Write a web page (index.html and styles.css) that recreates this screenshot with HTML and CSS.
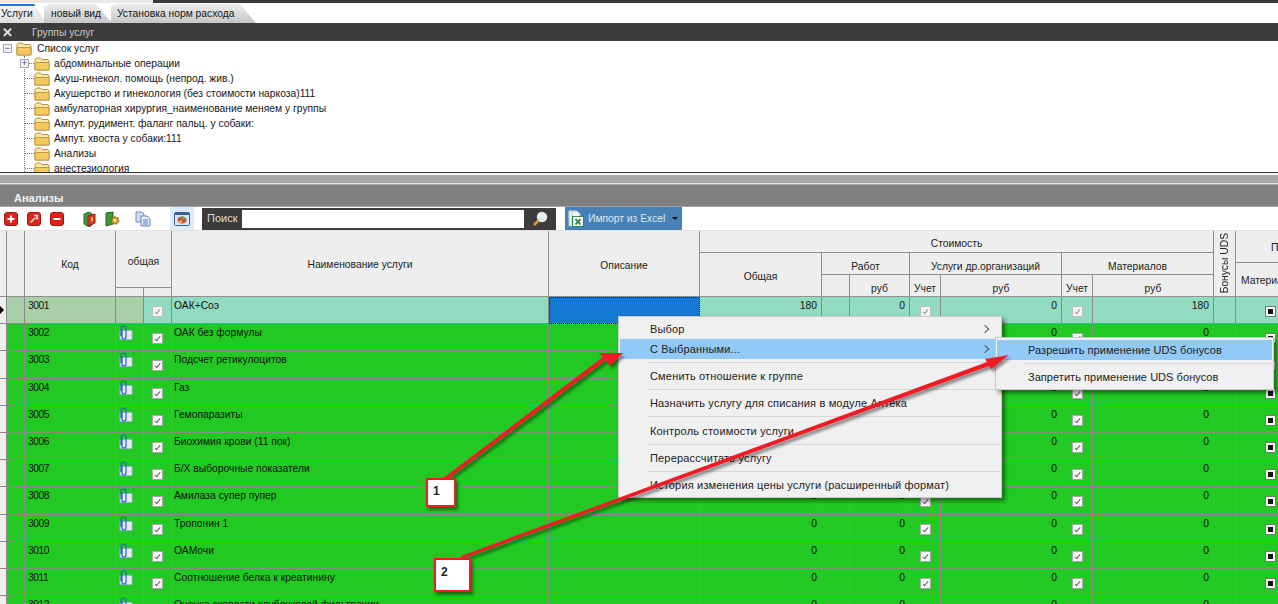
FILE: index.html
```html
<!DOCTYPE html>
<html lang="ru">
<head>
  <meta charset="UTF-8">
  <title>Услуги</title>
  <link rel="stylesheet" href="styles.css">
</head>
<body>

<svg class="defs" width="0" height="0">
  <symbol id="folder" viewBox="0 0 16 14">
    <path d="M1 4V2.500L2.500 1h4L8 2.500h6L15 4v9H1z" fill="#fbe7a8" stroke="#b9913e"/>
    <path d="M1 5.500h14V13H1z" fill="#f6c95f" stroke="#c09a45"/>
  </symbol>
  <symbol id="clip" viewBox="0 0 15 16">
    <path d="M2 5.500h12v9H2z" fill="#e4edf9" stroke="#9db4d8"/>
    <path d="M4 4.500V12a2 2 0 0 0 4 0V3.500a2.500 2.500 0 0 0-5 0V11" fill="none" stroke="#2a62c8" stroke-width="1.200"/>
  </symbol>
</svg>

<div class="topline"><span class="topline-left"></span></div>

<div class="tabs">
  <a class="tab tab-active">Услуги</a>
  <a class="tab tab-new">новый вид</a>
  <a class="tab tab-norm">Установка норм расхода</a>
</div>

<div class="groups-bar">
  <span class="groups-close">&#10005;</span>
  <span>Группы услуг</span>
</div>

<div class="tree">
  <div class="tree-root">
    <span class="tree-box">&minus;</span>
    <svg class="folder"><use href="#folder"/></svg>
    <span>Список услуг</span>
  </div>
  <div class="tree-list">
    <div class="tree-item"><span class="tree-box tree-box-child">+</span><svg class="folder"><use href="#folder"/></svg><span>абдоминальные операции</span></div>
    <div class="tree-item"><svg class="folder"><use href="#folder"/></svg><span>Акуш-гинекол. помощь (непрод. жив.)</span></div>
    <div class="tree-item"><svg class="folder"><use href="#folder"/></svg><span>Акушерство и гинекология (без стоимости наркоза)111</span></div>
    <div class="tree-item"><svg class="folder"><use href="#folder"/></svg><span>амбулаторная хирургия_наименование меняем у группы</span></div>
    <div class="tree-item"><svg class="folder"><use href="#folder"/></svg><span>Ампут. рудимент. фаланг пальц. у собаки:</span></div>
    <div class="tree-item"><svg class="folder"><use href="#folder"/></svg><span>Ампут. хвоста у собаки:111</span></div>
    <div class="tree-item"><svg class="folder"><use href="#folder"/></svg><span>Анализы</span></div>
    <div class="tree-item"><svg class="folder"><use href="#folder"/></svg><span>анестезиология</span></div>
  </div>
</div>

<div class="splitter"></div>
<div class="section-title">Анализы</div>

<div class="toolbar">
  <button class="tool tool-first">
    <svg width="14" height="14" viewBox="0 0 14 14"><rect x=".5" y=".5" width="13" height="13" rx="2.500" fill="#d9261c" stroke="#a5150f"/><path d="M7 3.500v7M3.500 7h7" stroke="#fff" stroke-width="2"/></svg>
  </button>
  <button class="tool">
    <svg width="14" height="14" viewBox="0 0 14 14"><rect x=".5" y=".5" width="13" height="13" rx="2.500" fill="#d9261c" stroke="#a5150f"/><path d="M3.500 10.500L8 6M7 3.500l3.500 0-1 3 2 0" fill="none" stroke="#f6d6d2" stroke-width="1.600"/></svg>
  </button>
  <button class="tool">
    <svg width="14" height="14" viewBox="0 0 14 14"><rect x=".5" y=".5" width="13" height="13" rx="2.500" fill="#d9261c" stroke="#a5150f"/><path d="M3.500 7h7" stroke="#fff" stroke-width="2"/></svg>
  </button>
  <button class="tool tool-gap">
    <svg width="13" height="16" viewBox="0 0 13 16"><path d="M1 3l5-2 3 2v11l-3 2-5-3z" fill="#3f9a3a" stroke="#2a6b28"/><path d="M5 5l7-2v9l-7 3z" fill="#d8352a" stroke="#9e1c14"/><path d="M8 6.500l2-.5v4l-2 .500z" fill="#f5c13c"/></svg>
  </button>
  <button class="tool tool-gear">
    <svg width="15" height="16" viewBox="0 0 15 16"><path d="M1 2l7-1v12l-7 2z" fill="#3b9a35" stroke="#22661f"/><circle cx="10" cy="9.500" r="3.500" fill="#e0a92a" stroke="#8a6410" stroke-dasharray="2 1" stroke-width="1.500"/><circle cx="10" cy="9.500" r="1.200" fill="#fff2b8"/></svg>
  </button>
  <button class="tool tool-copy">
    <svg width="16" height="16" viewBox="0 0 16 16"><path d="M1 1h6l2 2v8H1z" fill="#cfdcf2" stroke="#6d8cc0"/><path d="M6 5h6l3 3v7H6z" fill="#e6eefb" stroke="#5f80ba"/><path d="M8 9h5M8 11h5M8 13h5" stroke="#4f7fd0"/></svg>
  </button>
  <button class="tool-active">
    <svg width="16" height="14" viewBox="0 0 16 14"><rect x=".5" y=".5" width="15" height="13" rx="1" fill="#d9e6f6" stroke="#3c5f96"/><path d="M1 1h14v2H1z" fill="#3c5f96"/><ellipse cx="8" cy="8" rx="4.500" ry="3.500" fill="#c9503f"/><path d="M8 8l4-1.500A4 4 0 0 0 8 4.500z" fill="#6aa84f"/><path d="M8 8l-4 1a4 4 0 0 0 4 2.500z" fill="#e2b23a"/></svg>
  </button>
  <div class="search">
    <span class="search-label">Поиск</span>
    <input class="search-input" type="text">
    <span class="search-btn">
      <svg width="16" height="16" viewBox="0 0 16 16"><circle cx="10" cy="6" r="4.500" fill="#dff0fb" stroke="#e8e8e8" stroke-width="1.500"/><path d="M6.500 9.500L2 14" stroke="#e39a3a" stroke-width="2.500"/></svg>
    </span>
  </div>
  <button class="import-btn">
    <svg width="16" height="17" viewBox="0 0 16 17"><path d="M1 1h8l3 3v4H1z" fill="#eef3fa" stroke="#b9c6d8"/><path d="M1 1h3v15H1z" fill="#eef3fa" stroke="#b9c6d8"/><rect x="4.500" y="6.500" width="11" height="10" fill="#fff" stroke="#2d8a45"/><path d="M7.500 9l5 5.500M12.500 9l-5 5.500" stroke="#1f7a38" stroke-width="1.800"/></svg>
    <span class="import-text">Импорт из Excel</span>
    <span class="caret"></span>
  </button>
</div>

<div class="grid-head">
  <div class="hc h-ind"></div>
  <div class="hc h-sel"></div>
  <div class="hc h-code">Код</div>
  <div class="hc h-common">общая</div>
  <div class="hc h-common-a"></div>
  <div class="hc h-common-b"></div>
  <div class="hc h-name">Наименование услуги</div>
  <div class="hc h-desc">Описание</div>
  <div class="hc h-cost">Стоимость</div>
  <div class="hc h-total">Общая</div>
  <div class="hc h-work">Работ</div>
  <div class="hc h-work-a"></div>
  <div class="hc h-work-b">руб</div>
  <div class="hc h-other">Услуги др.организаций</div>
  <div class="hc h-other-a">Учет</div>
  <div class="hc h-other-b">руб</div>
  <div class="hc h-mat">Материалов</div>
  <div class="hc h-mat-a">Учет</div>
  <div class="hc h-mat-b">руб</div>
  <div class="hc h-uds"><span>Бонусы UDS</span></div>
  <div class="hc h-p">П</div>
  <div class="hc h-matname">Материалы</div>
</div>

<div class="rows">
  <div class="row row-current">
    <div class="ind"><span class="pointer"></span></div><div class="pale"></div><div class="pale code">3001</div><div class="pale"></div><div class="cc"><b class="chk"></b></div><div class="txt">ОАК+Соэ</div><div class="sel"></div><div class="num">180</div><div></div><div class="num">0</div><div class="cc"><b class="chk"></b></div><div class="num">0</div><div class="cc"><b class="chk"></b></div><div class="num">180</div><div></div><div class="cc cc-last"><b class="sq"></b></div>
  </div>
  <div class="row">
    <div class="ind"></div><div></div><div class="code">3002</div><div class="ic"><svg class="clip"><use href="#clip"/></svg></div><div class="cc"><b class="chk"></b></div><div class="txt">ОАК без формулы</div><div></div><div class="num">0</div><div></div><div class="num">0</div><div class="cc"><b class="chk"></b></div><div class="num">0</div><div class="cc"><b class="chk"></b></div><div class="num">0</div><div></div><div class="cc cc-last"><b class="sq"></b></div>
  </div>
  <div class="row">
    <div class="ind"></div><div></div><div class="code">3003</div><div class="ic"><svg class="clip"><use href="#clip"/></svg></div><div class="cc"><b class="chk"></b></div><div class="txt">Подсчет ретикулоцитов</div><div></div><div class="num">0</div><div></div><div class="num">0</div><div class="cc"><b class="chk"></b></div><div class="num">0</div><div class="cc"><b class="chk"></b></div><div class="num">0</div><div></div><div class="cc cc-last"><b class="sq"></b></div>
  </div>
  <div class="row">
    <div class="ind"></div><div></div><div class="code">3004</div><div class="ic"><svg class="clip"><use href="#clip"/></svg></div><div class="cc"><b class="chk"></b></div><div class="txt">Газ</div><div></div><div class="num">0</div><div></div><div class="num">0</div><div class="cc"><b class="chk"></b></div><div class="num">0</div><div class="cc"><b class="chk"></b></div><div class="num">0</div><div></div><div class="cc cc-last"><b class="sq"></b></div>
  </div>
  <div class="row">
    <div class="ind"></div><div></div><div class="code">3005</div><div class="ic"><svg class="clip"><use href="#clip"/></svg></div><div class="cc"><b class="chk"></b></div><div class="txt">Гемопаразиты</div><div></div><div class="num">0</div><div></div><div class="num">0</div><div class="cc"><b class="chk"></b></div><div class="num">0</div><div class="cc"><b class="chk"></b></div><div class="num">0</div><div></div><div class="cc cc-last"><b class="sq"></b></div>
  </div>
  <div class="row">
    <div class="ind"></div><div></div><div class="code">3006</div><div class="ic"><svg class="clip"><use href="#clip"/></svg></div><div class="cc"><b class="chk"></b></div><div class="txt">Биохимия крови (11 пок)</div><div></div><div class="num">0</div><div></div><div class="num">0</div><div class="cc"><b class="chk"></b></div><div class="num">0</div><div class="cc"><b class="chk"></b></div><div class="num">0</div><div></div><div class="cc cc-last"><b class="sq"></b></div>
  </div>
  <div class="row">
    <div class="ind"></div><div></div><div class="code">3007</div><div class="ic"><svg class="clip"><use href="#clip"/></svg></div><div class="cc"><b class="chk"></b></div><div class="txt">Б/Х выборочные показатели</div><div></div><div class="num">0</div><div></div><div class="num">0</div><div class="cc"><b class="chk"></b></div><div class="num">0</div><div class="cc"><b class="chk"></b></div><div class="num">0</div><div></div><div class="cc cc-last"><b class="sq"></b></div>
  </div>
  <div class="row">
    <div class="ind"></div><div></div><div class="code">3008</div><div class="ic"><svg class="clip"><use href="#clip"/></svg></div><div class="cc"><b class="chk"></b></div><div class="txt">Амилаза супер пупер</div><div></div><div class="num">0</div><div></div><div class="num">0</div><div class="cc"><b class="chk"></b></div><div class="num">0</div><div class="cc"><b class="chk"></b></div><div class="num">0</div><div></div><div class="cc cc-last"><b class="sq"></b></div>
  </div>
  <div class="row">
    <div class="ind"></div><div></div><div class="code">3009</div><div class="ic"><svg class="clip"><use href="#clip"/></svg></div><div class="cc"><b class="chk"></b></div><div class="txt">Тропонин 1</div><div></div><div class="num">0</div><div></div><div class="num">0</div><div class="cc"><b class="chk"></b></div><div class="num">0</div><div class="cc"><b class="chk"></b></div><div class="num">0</div><div></div><div class="cc cc-last"><b class="sq"></b></div>
  </div>
  <div class="row">
    <div class="ind"></div><div></div><div class="code">3010</div><div class="ic"><svg class="clip"><use href="#clip"/></svg></div><div class="cc"><b class="chk"></b></div><div class="txt">ОАМочи</div><div></div><div class="num">0</div><div></div><div class="num">0</div><div class="cc"><b class="chk"></b></div><div class="num">0</div><div class="cc"><b class="chk"></b></div><div class="num">0</div><div></div><div class="cc cc-last"><b class="sq"></b></div>
  </div>
  <div class="row">
    <div class="ind"></div><div></div><div class="code">3011</div><div class="ic"><svg class="clip"><use href="#clip"/></svg></div><div class="cc"><b class="chk"></b></div><div class="txt">Соотношение белка к креатинину</div><div></div><div class="num">0</div><div></div><div class="num">0</div><div class="cc"><b class="chk"></b></div><div class="num">0</div><div class="cc"><b class="chk"></b></div><div class="num">0</div><div></div><div class="cc cc-last"><b class="sq"></b></div>
  </div>
  <div class="row">
    <div class="ind"></div><div></div><div class="code">3012</div><div class="ic"><svg class="clip"><use href="#clip"/></svg></div><div class="cc"><b class="chk"></b></div><div class="txt">Оценка скорости клубочковой фильтрации</div><div></div><div class="num">0</div><div></div><div class="num">0</div><div class="cc"><b class="chk"></b></div><div class="num">0</div><div class="cc"><b class="chk"></b></div><div class="num">0</div><div></div><div class="cc cc-last"><b class="sq"></b></div>
  </div>
</div>

<!-- Контекстное меню -->
<div class="menu menu-main">
  <div class="menu-item">Выбор<span class="more"></span></div>
  <div class="menu-item menu-item-on">С Выбранными...<span class="more"></span></div>
  <div class="menu-sep"></div>
  <div class="menu-item">Сменить отношение к группе</div>
  <div class="menu-sep"></div>
  <div class="menu-item">Назначить услугу для списания в модуле Аптека</div>
  <div class="menu-sep"></div>
  <div class="menu-item">Контроль стоимости услуги</div>
  <div class="menu-sep"></div>
  <div class="menu-item">Перерассчитать услугу</div>
  <div class="menu-sep"></div>
  <div class="menu-item">История изменения цены услуги (расширенный формат)</div>
</div>

<div class="menu menu-sub">
  <div class="menu-item menu-item-on">Разрешить применение UDS бонусов</div>
  <div class="menu-sep"></div>
  <div class="menu-item">Запретить применение UDS бонусов</div>
</div>

<!-- Стрелки поверх скриншота -->
<svg class="arrows" width="1278" height="604" viewBox="0 0 1278 604">
  <defs>
    <filter id="shade" x="-10%" y="-10%" width="120%" height="120%">
      <feDropShadow dx="2" dy="3" stdDeviation="1.500" flood-color="#000" flood-opacity=".45"/>
    </filter>
  </defs>
  <g filter="url(#shade)" fill="#ee1c25">
    <path d="M442 479L444 482L606 360L610 366L623 353L599 353L603 357z"/>
    <path d="M461 556L462 559L989 366L991 369L1009 355L985 359L987 362z"/>
  </g>
</svg>
<div class="note note-one">1</div>
<div class="note note-two">2</div>

</body>
</html>
```

FILE: styles.css
```css
html, body {
  margin: 0;
  padding: 0;
  height: 604px;
  overflow: hidden;
}
body {
  position: relative;
  width: 1278px;
  background: #fff;
  font-family: "Liberation Sans", Arial, sans-serif;
  font-size: 10.3px;
  color: #161616;
}
.defs {
  position: absolute;
}

/* Верх окна */
.topline {
  height: 4px;
  box-sizing: border-box;
  background: #3a3a3a;
  border-bottom: 1px solid #fff;
}
.topline-left {
  display: block;
  width: 153px;
  height: 3px;
  background: #e9e9e9;
}
.tabs {
  display: flex;
  height: 19px;
  background: #fff;
}
.tab {
  display: block;
  height: 19px;
  line-height: 20px;
  background: linear-gradient(#ededed, #c6c6c6);
}
.tab-active {
  width: 46px;
  padding-left: 1px;
  box-sizing: border-box;
  background: linear-gradient(#1f78c8 0, #1f78c8 2px, #f4f4f4 2px, #dedede);
  clip-path: polygon(0 0, 34px 0, 100% 100%, 0 100%);
}
.tab-new {
  width: 68px;
  margin-left: -2px;
  padding-left: 7px;
  box-sizing: border-box;
  clip-path: polygon(0 10%, 5px 0, calc(100% - 16px) 0, 100% 100%, 0 100%);
}
.tab-norm {
  width: 145px;
  margin-left: -1px;
  padding-left: 6px;
  box-sizing: border-box;
  clip-path: polygon(0 10%, 5px 0, calc(100% - 16px) 0, 100% 100%, 0 100%);
}
.groups-bar {
  display: flex;
  align-items: center;
  height: 18px;
  background: #3c3c3c;
  color: #c8c8c8;
}
.groups-close {
  width: 32px;
  padding-left: 2px;
  box-sizing: border-box;
  font-size: 13px;
  font-weight: bold;
  color: #e4e4e4;
}

/* Дерево групп */
.tree {
  height: 131px;
  overflow: hidden;
  background: #fff;
}
.tree-root {
  display: flex;
  align-items: center;
  height: 15px;
  padding-left: 3px;
}
.tree-box {
  width: 9px;
  height: 9px;
  line-height: 7px;
  text-align: center;
  font-size: 9px;
  color: #2a4f9a;
  border: 1px solid #a9a9a9;
  box-sizing: border-box;
  background: #f0f2f6;
  flex: none;
}
.tree-box-child {
  position: absolute;
  left: -5px;
  top: 3px;
}
.tree-root .folder {
  margin-left: 4px;
  margin-right: 5px;
}
.folder {
  width: 16px;
  height: 14px;
  flex: none;
}
.tree-list {
  margin-left: 24px;
  border-left: 1px dotted #777;
}
.tree-item {
  position: relative;
  display: flex;
  align-items: center;
  height: 15px;
  padding-left: 9px;
}
.tree-item::before {
  content: "";
  position: absolute;
  left: 0;
  top: 7px;
  width: 9px;
  border-top: 1px dotted #777;
}
.tree-item .folder {
  margin-right: 4px;
}

/* Разделитель и заголовок */
.splitter {
  height: 13px;
  box-sizing: border-box;
  border-top: 1px solid #333;
  background: linear-gradient(#f2f2f2 0, #f2f2f2 2px, #a8a8a8 2px, #a8a8a8 10px, #e4e4e4 10px, #e4e4e4 11px, #a8a8a8 11px);
}
.section-title {
  height: 22px;
  line-height: 26px;
  padding-left: 14px;
  box-sizing: border-box;
  background: #808080;
  color: #f2f2f2;
  font-size: 11px;
  font-weight: bold;
  border-bottom: 1px solid #a4a4a4;
}

/* Панель инструментов */
.toolbar {
  display: flex;
  align-items: center;
  height: 24px;
  box-sizing: border-box;
  border-bottom: 1px solid #e2e2e2;
  background: #fff;
}
.tool, .tool-active, .import-btn {
  border: 0;
  padding: 0;
  margin: 0;
  background: none;
  display: flex;
  align-items: center;
  justify-content: center;
  font: inherit;
}
.tool {
  width: 14px;
  height: 16px;
  margin-left: 9px;
}
.tool-first {
  margin-left: 4px;
}
.tool-gap {
  width: 13px;
  margin-left: 19px;
}
.tool-gear {
  width: 15px;
  margin-left: 9px;
}
.tool-copy {
  width: 16px;
  margin-left: 15px;
}
.tool-active {
  width: 24px;
  height: 23px;
  margin-left: 19px;
  background: #dcebf9;
}
.search {
  display: flex;
  align-items: stretch;
  height: 22px;
  margin-left: 8px;
  background: #3c3c3c;
}
.search-label {
  width: 40px;
  line-height: 21px;
  padding-left: 5px;
  box-sizing: border-box;
  color: #ddd;
  font-size: 11px;
}
.search-input {
  width: 282px;
  height: 18px;
  margin: 2px 0 0;
  padding: 0;
  border: 0;
  background: #fff;
}
.search-btn {
  width: 32px;
  display: flex;
  align-items: center;
  justify-content: center;
}
.import-btn {
  justify-content: flex-start;
  width: 117px;
  height: 23px;
  margin-left: 9px;
  padding-left: 3px;
  box-sizing: border-box;
  background: #4682b8;
  color: #dde8f2;
  font-size: 10.3px;
}
.import-text {
  margin-left: 4px;
  white-space: nowrap;
}
.caret {
  margin-left: 7px;
  border: 3px solid transparent;
  border-top-color: #101010;
  border-bottom: 0;
}

/* Шапка таблицы */
.grid-head {
  display: grid;
  grid-template-columns: 7px 18px 91px 28px 28px 377px 151px 122px 28px 60px 31px 121px 31px 121px 22px 64px;
  grid-template-rows: 22px 10px 12px 13px 9px;
  height: 66px;
  width: 1300px;
}
.hc {
  display: flex;
  align-items: center;
  justify-content: center;
  box-sizing: border-box;
  padding-top: 2px;
  background: #eeeeee;
  border-right: 1px solid #8f8f8f;
  border-bottom: 1px solid #8f8f8f;
  white-space: nowrap;
  overflow: hidden;
  color: #222;
}
.h-ind { grid-column: 1; grid-row: 1 / 6; }
.h-sel { grid-column: 2; grid-row: 1 / 6; }
.h-code { grid-column: 3; grid-row: 1 / 6; }
.h-common { grid-column: 4 / 6; grid-row: 1 / 5; padding-top: 4px; }
.h-common-a { grid-column: 4; grid-row: 5; }
.h-common-b { grid-column: 5; grid-row: 5; }
.h-name { grid-column: 6; grid-row: 1 / 6; }
.h-desc { grid-column: 7; grid-row: 1 / 6; padding-top: 4px; }
.h-cost { grid-column: 8 / 15; grid-row: 1; padding-top: 3px; }
.h-total { grid-column: 8; grid-row: 2 / 6; padding-top: 3px; }
.h-work { grid-column: 9 / 11; grid-row: 2 / 4; padding-top: 6px; }
.h-work-a { grid-column: 9; grid-row: 4 / 6; }
.h-work-b { grid-column: 10; grid-row: 4 / 6; padding-top: 6px; }
.h-other { grid-column: 11 / 13; grid-row: 2 / 4; padding-top: 6px; }
.h-other-a { grid-column: 11; grid-row: 4 / 6; padding-top: 6px; }
.h-other-b { grid-column: 12; grid-row: 4 / 6; padding-top: 6px; }
.h-mat { grid-column: 13 / 15; grid-row: 2 / 4; padding-top: 6px; }
.h-mat-a { grid-column: 13; grid-row: 4 / 6; padding-top: 6px; }
.h-mat-b { grid-column: 14; grid-row: 4 / 6; padding-top: 6px; }
.h-uds { grid-column: 15; grid-row: 1 / 6; padding-top: 0; }
.h-uds span {
  writing-mode: vertical-rl;
  transform: rotate(180deg);
}
.h-p {
  grid-column: 16;
  grid-row: 1 / 3;
  justify-content: flex-start;
  padding-left: 35px;
}
.h-matname {
  grid-column: 16;
  grid-row: 3 / 6;
  justify-content: flex-start;
  padding-left: 5px;
}

/* Строки таблицы */
.row {
  display: grid;
  grid-template-columns: 7px 18px 91px 28px 28px 377px 151px 122px 28px 60px 31px 121px 31px 121px 22px 64px;
  height: 27.2px;
  width: 1300px;
  background: #22c922;
  color: #111;
}
.row > div {
  box-sizing: border-box;
  border-right: 1px solid #8a8a8a;
  border-bottom: 1px solid #8a8a8a;
  line-height: 14px;
  padding-top: 2px;
  white-space: nowrap;
  overflow: hidden;
}
.row-current {
  background: #91dbc0;
}
.row > .ind {
  background: #eeeeee;
  position: relative;
}
.pointer {
  position: absolute;
  left: 0;
  top: 9px;
  border: 4px solid transparent;
  border-left: 4px solid #000;
  border-right: 0;
}
.row > .pale {
  background: #a9cfa9;
}
.code {
  padding-left: 3px;
  letter-spacing: -.5px;
}
.txt {
  padding-left: 2px;
}
.num {
  text-align: right;
  padding-right: 4px;
}
.row > .sel {
  background: #1578d2;
  outline: 1px dotted #222;
  outline-offset: -1px;
}
.row > .ic {
  padding: 1px 0 0 2px;
}
.clip {
  display: block;
  width: 15px;
  height: 16px;
}
.row > .cc {
  display: flex;
  align-items: center;
  justify-content: center;
  padding-top: 3px;
}
.row > .cc-last {
  justify-content: flex-start;
  padding-left: 29px;
}
.chk, .sq {
  position: relative;
  display: block;
  width: 11px;
  height: 11px;
  box-sizing: border-box;
  border: 1px solid #a8a8a8;
  background: #f6f6f6;
}
.chk::after {
  content: "";
  position: absolute;
  left: 3px;
  top: 1px;
  width: 2px;
  height: 5px;
  border: solid #666;
  border-width: 0 1px 1px 0;
  transform: rotate(40deg);
}
.row-current .chk {
  border-color: #bdbdbd;
}
.row-current .chk::after {
  border-color: #999;
}
.sq {
  border-color: #777;
  background: #fff;
}
.sq::after {
  content: "";
  position: absolute;
  left: 2px;
  top: 2px;
  width: 5px;
  height: 5px;
  background: #111;
}

/* Меню */
.menu {
  position: absolute;
  box-sizing: border-box;
  background: #f0f0f0;
  border: 1px solid #c9c9c9;
  padding: 2px 1px;
  box-shadow: 3px 3px 4px rgba(0, 0, 0, .45);
  font-size: 11px;
  color: #222;
}
.menu-main {
  left: 618px;
  top: 316px;
  width: 384px;
  height: 182px;
}
.menu-sub {
  left: 995px;
  top: 337px;
  width: 279px;
  height: 53px;
}
.menu-sub .menu-item {
  padding-left: 31px;
  letter-spacing: .05px;
}
.menu-item {
  position: relative;
  height: 20px;
  line-height: 21px;
  padding-left: 30px;
  white-space: nowrap;
  letter-spacing: .17px;
}
.menu-item-on {
  background: #91c9f7;
}
.menu-sep {
  height: 1px;
  margin: 3px 1px 3.2px 27px;
  background: #d7d7d7;
}
.more {
  position: absolute;
  right: 12px;
  top: 7px;
  width: 5px;
  height: 5px;
  border: solid #555;
  border-width: 1px 1px 0 0;
  transform: rotate(45deg);
}

/* Пометки */
.arrows {
  position: absolute;
  left: 0;
  top: 0;
}
.note {
  position: absolute;
  box-sizing: border-box;
  background: #fff;
  border: 2px solid #ee1c25;
  box-shadow: 2px 3px 3px rgba(0, 0, 0, .45);
  font-size: 12px;
  font-weight: bold;
  line-height: 14px;
  color: #222;
}
.note-one {
  left: 426px;
  top: 478px;
  width: 30px;
  height: 29px;
  padding: 4px 0 0 5px;
}
.note-two {
  left: 434px;
  top: 558px;
  width: 37px;
  height: 34px;
  padding: 5px 0 0 5px;
}
```
